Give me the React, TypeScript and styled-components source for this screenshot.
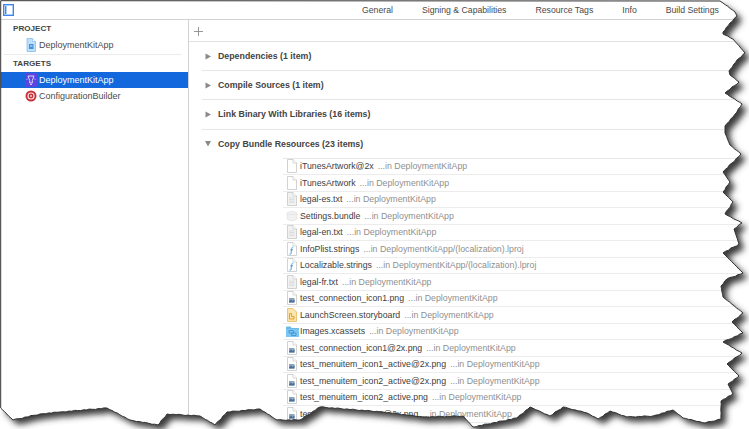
import { FC } from "react";
import styled, { createGlobalStyle } from "styled-components";

const GlobalStyle = createGlobalStyle`
  html, body {
    margin: 0;
    padding: 0;
    background: #fff;
  }
  body {
    font-family: "Liberation Sans", Arial, sans-serif;
    -webkit-font-smoothing: antialiased;
  }
`;

// #region styled
const Page = styled.div`
  position: relative;
  width: 749px;
  height: 429px;
  overflow: hidden;
  background: #fff;
  display: flex;
  flex-direction: column;
`;

const Toolbar = styled.div`
  flex: none;
  height: 19px;
  display: flex;
  align-items: center;
  border-bottom: 1px solid #d2d2d2;
  padding-left: 3px;
`;

const Tabs = styled.div`
  display: flex;
  gap: 29px;
  margin-left: 348px;
  white-space: nowrap;
`;

const Tab = styled.span`
  font-size: 8.7px;
  color: #4a4a4a;
`;

const Body = styled.div`
  flex: 1;
  display: flex;
  min-height: 0;
`;

const Sidebar = styled.div`
  flex: none;
  width: 188px;
  border-right: 1px solid #d2d2d2;
`;

const GroupTitle = styled.div`
  height: 17px;
  line-height: 17px;
  padding-left: 13px;
  font-size: 8.1px;
  font-weight: bold;
  color: #444;
`;

const TreeRow = styled.div<{ $selected?: boolean }>`
  height: 16.5px;
  display: flex;
  align-items: center;
  gap: 2px;
  padding-left: 25px;
  font-size: 9px;
  color: ${(p) => (p.$selected ? "#fff" : "#4c4c4c")};
  background: ${(p) => (p.$selected ? "#1268dc" : "transparent")};
`;

const TreeDivider = styled.div`
  height: 1px;
  margin: 0 6px 0 4px;
  background: #ececec;
`;

const Main = styled.div`
  flex: 1;
  min-width: 0;
`;

const PlusBar = styled.div`
  height: 22px;
  display: flex;
  align-items: center;
  padding: 2px 0 0 5px;
  box-sizing: border-box;
  border-bottom: 1px solid #e2e2e2;
`;

const Phase = styled.div<{ $last?: boolean }>`
  height: ${(p) => (p.$last ? "28px" : "29.2px")};
  box-sizing: border-box;
  margin-left: 13px;
  display: flex;
  align-items: center;
  gap: 7px;
  padding-left: 3px;
  border-bottom: ${(p) => (p.$last ? "none" : "1px solid #e6e6e6")};
`;

const PhaseTitle = styled.span`
  font-size: 8.8px;
  font-weight: bold;
  color: #444;
`;

const FileTable = styled.div`
  margin-left: 94px;
  border-top: 1px solid #e8e8e8;
`;

const FileRow = styled.div`
  height: 16.5px;
  box-sizing: border-box;
  display: flex;
  align-items: center;
  padding-left: 3px;
  border-bottom: 1px solid #ececec;
  white-space: nowrap;
`;

const IconSlot = styled.span`
  flex: none;
  width: 14px;
  height: 14px;
  display: flex;
  align-items: center;
  justify-content: flex-start;
`;

const FileName = styled.span`
  font-size: 8.75px;
  color: #404040;
`;

const FileTarget = styled.span`
  margin-left: 4px;
  font-size: 8.8px;
  color: #8f8f8f;
`;

const TornEdge = styled.svg`
  position: absolute;
  left: 0;
  top: 0;
  pointer-events: none;
`;
// #endregion

const SidebarToggle = () => (
  <svg width="11" height="12" viewBox="0 0 11 12">
    <rect x="0.7" y="0.7" width="9.6" height="10.6" fill="#fff" stroke="#3b86ea" strokeWidth="1.4" />
    <rect x="2" y="2" width="1.4" height="8" fill="#3b86ea" />
  </svg>
);

const Plus = () => (
  <svg width="9" height="9" viewBox="0 0 9 9">
    <path d="M4.5 0v9M0 4.5h9" stroke="#8a8a8a" strokeWidth="0.9" />
  </svg>
);

const Triangle: FC<{ open?: boolean }> = ({ open }) => (
  <svg width="6" height="7" viewBox="0 0 6 7">
    {open ? <path d="M0 1h6L3 6.500z" fill="#8a8a8a" /> : <path d="M0.500 0.500L6 3.500L0.500 6.500z" fill="#8a8a8a" />}
  </svg>
);

const ProjectIcon = () => (
  <svg width="12" height="14" viewBox="0 0 12 14">
    <path d="M2 0.500h5.500L10.500 3.500V13.500H2z" fill="#bfe0fa" stroke="#7ab8ee" strokeWidth="0.7" />
    <path d="M7.500 0.500V3.500h3" fill="#fff" stroke="#7ab8ee" strokeWidth="0.6" />
    <rect x="4" y="6" width="4.500" height="5" fill="#3f93e0" />
    <rect x="5" y="7.500" width="2.500" height="1" fill="#d6ecfc" />
  </svg>
);

const AppTargetIcon = () => (
  <svg width="12" height="14" viewBox="0 0 12 14">
    <rect width="12" height="14" rx="1" fill="#5b45e0" />
    <path d="M3 3h6L7.300 7.500V10H4.700V7.500z" fill="none" stroke="#e9e4ff" strokeWidth="0.9" />
    <path d="M5 11.500h2M2.500 6L1.500 6.500M9.500 6L10.500 6.500" stroke="#e9e4ff" strokeWidth="0.8" />
  </svg>
);

const TargetIcon = () => (
  <svg width="12" height="12" viewBox="0 0 12 12">
    <circle cx="6" cy="6" r="5.500" fill="#c9303a" />
    <circle cx="6" cy="6" r="3.600" fill="#f6e3e3" />
    <circle cx="6" cy="6" r="2.400" fill="#c9303a" />
    <circle cx="6" cy="6" r="0.900" fill="#f6e3e3" />
  </svg>
);

type FileKind = "blank" | "text" | "bundle" | "strings" | "png" | "storyboard" | "folder";

const Sheet: FC<{ fill?: string }> = ({ fill = "#fff" }) => (
  <>
    <path d="M1.500 0.500H7L10.500 4V13.500H1.500z" fill={fill} stroke="#c6c6c6" strokeWidth="0.8" />
    <path d="M7 0.500V4H10.500" fill="#fff" stroke="#c6c6c6" strokeWidth="0.7" />
  </>
);

const FileIcon: FC<{ kind: FileKind }> = ({ kind }) => {
  if (kind === "folder") {
    return (
      <svg width="13" height="11" viewBox="0 0 13 11">
        <path d="M0 1.500C0 1 .4.500 1 .500H4.500L5.500 2H13V11H0z" fill="#68b8ec" />
        <path d="M0 3h13v8H0z" fill="#7cc6f3" />
        <path d="M3 4.500h4.500v2.500H3zM5.500 7h4.500v2.500H5.500z" fill="none" stroke="#3f8fd0" strokeWidth="0.8" />
      </svg>
    );
  }
  if (kind === "bundle") {
    return (
      <svg width="12" height="12" viewBox="0 0 12 12">
        <path d="M1 3L4 1.500H8L11 3V9L8 10.500H4L1 9z" fill="#f1f1f1" stroke="#e2e2e2" strokeWidth="0.7" />
        <path d="M1 4.500h10" stroke="#e2e2e2" strokeWidth="0.7" />
      </svg>
    );
  }
  return (
    <svg width="11" height="14" viewBox="0 0 11 14">
      {kind === "storyboard" ? (
        <>
          <path d="M1.500 0.500H7L10.500 4V13.500H1.500z" fill="#fbe4ae" stroke="#e6b95a" strokeWidth="0.8" />
          <path d="M3.500 5.500H5.500V8.500H8V11H3.500z" fill="none" stroke="#e09a1e" strokeWidth="0.9" />
        </>
      ) : (
        <Sheet fill={kind === "text" ? "#f2f2f2" : "#fff"} />
      )}
      {kind === "text" && <path d="M3 6h5.500M3 7.500h5.500M3 9h5.500M3 10.500h5.500" stroke="#d0d0d0" strokeWidth="0.6" />}
      {kind === "strings" && <path d="M7.200 5.200C6 5 5.800 6 5.600 7.500L5 11.500C4.800 12.300 4.300 12.400 3.500 12.200M4.300 7.800H7" fill="none" stroke="#3f93e0" strokeWidth="0.9" />}
      {kind === "png" && (
        <>
          <rect x="3" y="7" width="5.500" height="4.500" fill="#8fa5bd" />
          <path d="M3 10.500L5 8.500L6.500 10L8.500 8.500V11.500H3z" fill="#4a6f9c" />
        </>
      )}
    </svg>
  );
};

const FILES: { name: string; kind: FileKind; path?: string }[] = [
  { name: "iTunesArtwork@2x", kind: "blank" },
  { name: "iTunesArtwork", kind: "blank" },
  { name: "legal-es.txt", kind: "text" },
  { name: "Settings.bundle", kind: "bundle" },
  { name: "legal-en.txt", kind: "text" },
  { name: "InfoPlist.strings", kind: "strings", path: "DeploymentKitApp/(localization).lproj" },
  { name: "Localizable.strings", kind: "strings", path: "DeploymentKitApp/(localization).lproj" },
  { name: "legal-fr.txt", kind: "text" },
  { name: "test_connection_icon1.png", kind: "png" },
  { name: "LaunchScreen.storyboard", kind: "storyboard" },
  { name: "Images.xcassets", kind: "folder" },
  { name: "test_connection_icon1@2x.png", kind: "png" },
  { name: "test_menuitem_icon1_active@2x.png", kind: "png" },
  { name: "test_menuitem_icon2_active@2x.png", kind: "png" },
  { name: "test_menuitem_icon2_active.png", kind: "png" },
  { name: "test_menuitem_icon2@2x.png", kind: "png" },
];

const PHASES = ["Dependencies (1 item)", "Compile Sources (1 item)", "Link Binary With Libraries (16 items)"];
const TABS = ["General", "Signing & Capabilities", "Resource Tags", "Info", "Build Settings"];

// outline of the torn-off screenshot, clockwise from the top left corner
const OUTLINE: [number, number][] = [
  [720, 1], [723, 3], [735, 12], [737, 16], [730, 23], [723, 32], [723, 34], [733, 39], [745, 53], [737, 60],
  [729, 71], [730, 75], [739, 82], [725, 93], [742, 104], [733, 117], [725, 126], [725, 133], [730, 145], [741, 154],
  [723, 172], [730, 182], [723, 192], [733, 202], [725, 214], [742, 223], [734, 229], [739, 244], [723, 253], [743, 273],
  [727, 279], [721, 286], [723, 297], [743, 313], [732, 322], [743, 333], [723, 342], [742, 353], [727, 364], [739, 376],
  [728, 384], [733, 394], [721, 401], [721, 419], [705, 423], [683, 418], [673, 410], [653, 416], [627, 417], [610, 411],
  [598, 419], [587, 413], [563, 407], [550, 416], [530, 407], [517, 418], [473, 427], [463, 416], [423, 417], [383, 412],
  [320, 407], [300, 420], [277, 420], [260, 409], [227, 412], [215, 425], [200, 416], [167, 414], [158, 425], [130, 420],
  [107, 408], [60, 412], [40, 414], [13, 420], [0.7, 408],
];

const pagePath = () => {
  let d = "M0.7 0.7";
  OUTLINE.forEach(([x, y], i) => {
    const [px, py] = i === 0 ? [0.7, 0.7] : OUTLINE[i - 1];
    const steps = i === 0 ? 1 : Math.max(1, Math.round(Math.hypot(x - px, y - py) / 3));
    for (let s = 1; s <= steps; s++) {
      const t = s / steps;
      // small fixed wobble so long stretches look torn and not straight
      const wobble = s === steps ? 0 : (((i * 7 + s * 13) % 5) - 2) * 0.2;
      d += `L${(px + (x - px) * t + wobble * 0.6).toFixed(1)} ${(py + (y - py) * t + wobble).toFixed(1)}`;
    }
  });
  return d + "Z";
};

const App = () => {
  const page = pagePath();
  const outside = `M-20 -20H769V449H-20Z${page}`;
  return (
    <>
      <GlobalStyle />
      <Page>
        <Toolbar>
          <SidebarToggle />
          <Tabs>
            {TABS.map((t) => (
              <Tab key={t}>{t}</Tab>
            ))}
          </Tabs>
        </Toolbar>
        <Body>
          <Sidebar>
            <GroupTitle>PROJECT</GroupTitle>
            <TreeRow>
              <ProjectIcon />
              DeploymentKitApp
            </TreeRow>
            <TreeDivider />
            <GroupTitle>TARGETS</GroupTitle>
            <TreeRow $selected>
              <AppTargetIcon />
              DeploymentKitApp
            </TreeRow>
            <TreeRow>
              <TargetIcon />
              ConfigurationBuilder
            </TreeRow>
          </Sidebar>
          <Main>
            <PlusBar>
              <Plus />
            </PlusBar>
            {PHASES.map((p) => (
              <Phase key={p}>
                <Triangle />
                <PhaseTitle>{p}</PhaseTitle>
              </Phase>
            ))}
            <Phase $last>
              <Triangle open />
              <PhaseTitle>Copy Bundle Resources (23 items)</PhaseTitle>
            </Phase>
            <FileTable>
              {FILES.map((f) => (
                <FileRow key={f.name}>
                  <IconSlot>
                    <FileIcon kind={f.kind} />
                  </IconSlot>
                  <FileName>{f.name}</FileName>
                  <FileTarget>...in {f.path ?? "DeploymentKitApp"}</FileTarget>
                </FileRow>
              ))}
            </FileTable>
          </Main>
        </Body>
        <TornEdge width="749" height="429" viewBox="0 0 749 429">
          <defs>
            <filter id="tornBlur" x="-5%" y="-5%" width="110%" height="110%">
              <feGaussianBlur stdDeviation="3" />
            </filter>
            <clipPath id="tornOutside">
              <path d={outside} clipRule="evenodd" />
            </clipPath>
          </defs>
          <path d={outside} fill="#fff" fillRule="evenodd" />
          <g clipPath="url(#tornOutside)">
            <path d={page} fill="#3a3a3a" filter="url(#tornBlur)" transform="translate(5 5)" />
          </g>
          <path d={page} fill="none" stroke="#333" strokeWidth="1" />
        </TornEdge>
      </Page>
    </>
  );
};

export default App;
